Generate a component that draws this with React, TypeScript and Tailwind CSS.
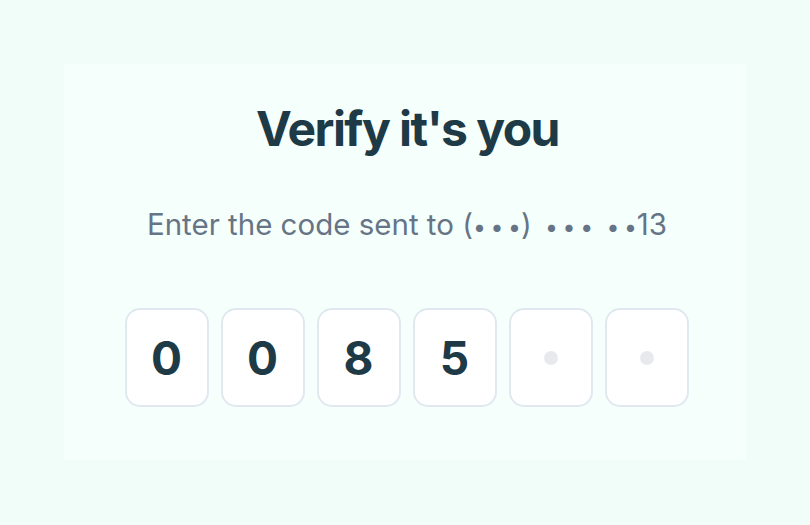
import React from "react";

const digits = ["0", "0", "8", "5", "", ""];

function Dots({ n, gap }: { n: number; gap?: boolean }) {
  return (
    <span className={gap ? "text-[23px] ml-[5px]" : "text-[23px]"}>
      <span className="tracking-[0.2em]">{"•".repeat(n - 1)}</span>•
    </span>
  );
}

export default function App() {
  return (
    <div
      className="w-[810px] h-[525px] bg-[#f0fdf9] flex items-start justify-center pt-[64px]"
      style={{ fontFamily: "Inter, 'Noto Sans', sans-serif" }}
    >
      <div className="w-[682px] h-[396px] bg-[#f5fffb] flex flex-col items-center pt-[36px]">
        <h1 className="ml-[5px] text-[48px] leading-[58px] font-bold text-[#1e3a46] tracking-[-0.032em]">
          Verify it's you
        </h1>
        <p className="mt-[48px] ml-[4px] h-[36px] text-[29.5px] leading-[36px] text-[#667485]">
          Enter the code sent to (<Dots n={3} />) <Dots n={3} gap /> <Dots n={2} gap />13
        </p>
        <div className="mt-[66px] ml-[3px] flex gap-[12px]">
          {digits.map((d, i) => (
            <div
              key={i}
              className="w-[84px] h-[99px] rounded-[15px] border-2 border-[#e2e8f0] bg-white flex items-center justify-center"
            >
              {d ? (
                <span className="text-[46px] leading-none font-bold text-[#1e3a46]">{d}</span>
              ) : (
                <span className="w-[14px] h-[14px] rounded-full bg-[#e8e9ed]" />
              )}
            </div>
          ))}
        </div>
      </div>
    </div>
  );
}
